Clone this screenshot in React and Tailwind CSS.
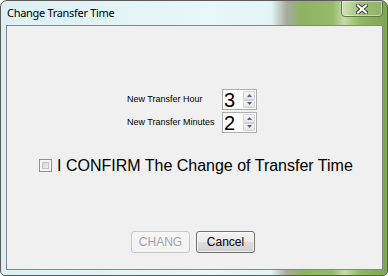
import React from 'react';

// ── Spin box (numeric up/down) ─────────────────────────────
function SpinBox({ value }) {
  return (
    <div className="w-[35px] h-[21px] border border-[#abadb3] bg-white flex items-center justify-between">
      <span className="pl-[1px] text-[20px] leading-none text-black font-['Liberation_Sans',Arial,sans-serif]">{value}</span>
      <div className="flex flex-col h-full py-[1px] pr-[1px] gap-0">
        {['up', 'down'].map(d => (
          <div
            key={d}
            className="w-[12px] flex-1 border border-[#cfd1d4] rounded-[1px] bg-[linear-gradient(#f6f6f6,#e6e6e6)] flex items-center justify-center"
          >
            <svg width="5" height="3" viewBox="0 0 5 3">
              {d === 'up'
                ? <polygon points="2.5,0 5,3 0,3" fill="#4d6185" />
                : <polygon points="0,0 5,0 2.5,3" fill="#4d6185" />}
            </svg>
          </div>
        ))}
      </div>
    </div>
  );
}

export default function App() {
  return (
    <div className="w-[388px] h-[276px] flex flex-col border border-[#5b5b5b] rounded-t-[7px] rounded-b-[5px] overflow-hidden bg-[linear-gradient(to_right,#dcf0f3_0%,#e8f7f9_55%,#e2f4f6_70%,#a8ab9c_74%,#8db35f_78%,#96ba6c_86%,#c4dca6_89%,#92b765_93%,#7ea552_100%)]">
      {/* title bar */}
      <div className="relative h-[24px] shrink-0 flex items-center pl-[6px]">
        <span className="text-[11px] tracking-[-0.3px] text-black font-['Noto_Sans',sans-serif]">Change Transfer Time</span>
        <div className="absolute right-[4px] top-[-1px] w-[42px] h-[17px] rounded-b-[4px] border border-[#5f7a45] shadow-[inset_0_0_0_1px_rgba(255,255,255,0.45)] bg-[rgba(255,255,255,0.12)] flex items-center justify-center">
          <svg width="12" height="10" viewBox="0 0 12 10">
            <path d="M2 1.5 L10 8.5 M10 1.5 L2 8.5" stroke="#3a3a3a" strokeWidth="4" strokeLinecap="square" />
            <path d="M2 1.5 L10 8.5 M10 1.5 L2 8.5" stroke="#ffffff" strokeWidth="2.2" strokeLinecap="square" />
          </svg>
        </div>
      </div>

      {/* client area */}
      <div className="flex-1 ml-[5px] mr-[4px] mb-[5px] border border-[#828790] bg-[#f0f0f0] flex flex-col pt-[63px]">
        <div className="ml-[120px] flex flex-col gap-[2px] font-['Liberation_Sans',Arial,sans-serif]">
          {[['New Transfer Hour', '3'], ['New Transfer Minutes', '2']].map(([label, v]) => (
            <div key={label} className="flex items-center">
              <span className="w-[95px] text-[9px] text-black">{label}</span>
              <SpinBox value={v} />
            </div>
          ))}
        </div>

        <div className="mt-[26px] ml-[32px] h-[13px] flex items-center gap-[5px] font-['Liberation_Sans',Arial,sans-serif]">
          <div className="w-[13px] h-[13px] border border-[#8f8f8f] bg-[#f4f4f4] p-[2px]">
            <div className="w-full h-full border border-[#c4c4c4] bg-[linear-gradient(135deg,#d4d4d4,#f2f2f2)]" />
          </div>
          <span className="text-[16px] leading-none text-black">I CONFIRM The Change of Transfer Time</span>
        </div>

        <div className="mt-[59px] ml-[124px] flex gap-[6px] font-['Liberation_Sans',Arial,sans-serif] text-[12px]">
          <div className="w-[59px] h-[22px] rounded-[3px] border border-[#c6c9cc] bg-[#f4f4f4] flex items-center justify-center text-[#a3a3a3]">
            CHANG
          </div>
          <div className="w-[59px] h-[22px] rounded-[3px] border border-[#707070] bg-[linear-gradient(#f2f2f2_0%,#ebebeb_48%,#dddddd_52%,#cfcfcf_100%)] shadow-[inset_0_0_0_1px_rgba(255,255,255,0.7)] flex items-center justify-center text-black">
            Cancel
          </div>
        </div>
      </div>
    </div>
  );
}
